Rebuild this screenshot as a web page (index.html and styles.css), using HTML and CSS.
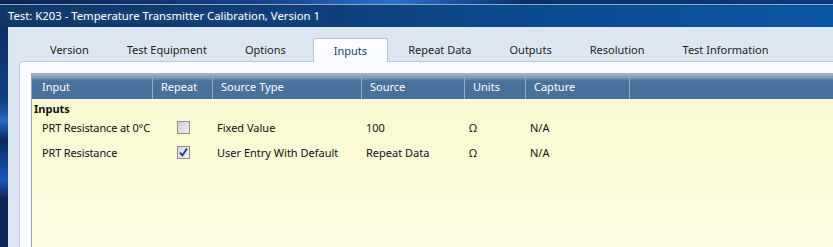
FILE: index.html
```html
<!DOCTYPE html>
<html lang="en">
<head>
  <meta charset="UTF-8" />
  <title>Test: K203 - Temperature Transmitter Calibration, Version 1</title>
  <link rel="stylesheet" href="styles.css">
</head>
<body>
  <div class="window">
    <div class="titlebar">Test: K203 - Temperature Transmitter Calibration, Version 1</div>
    <div class="client">
      <div class="tabs">
        <div class="tab">Version</div>
        <div class="tab">Test Equipment</div>
        <div class="tab">Options</div>
        <div class="tab selected">Inputs</div>
        <div class="tab">Repeat Data</div>
        <div class="tab">Outputs</div>
        <div class="tab">Resolution</div>
        <div class="tab">Test Information</div>
      </div>
      <div class="panel">
        <div class="grid">
          <div class="grid-head">
            <div class="hcell first">Input</div>
            <div class="hcell">Repeat</div>
            <div class="hcell">Source Type</div>
            <div class="hcell">Source</div>
            <div class="hcell">Units</div>
            <div class="hcell">Capture</div>
            <div class="hcell last"></div>
          </div>
          <div class="grid-body">
            <div class="group">Inputs</div>
            <div class="row">
              <div class="cell first">PRT Resistance at 0°C</div>
              <div class="cell center"><span class="check"></span></div>
              <div class="cell">Fixed Value</div>
              <div class="cell">100</div>
              <div class="cell">Ω</div>
              <div class="cell">N/A</div>
            </div>
            <div class="row">
              <div class="cell first">PRT Resistance</div>
              <div class="cell center">
                <span class="check checked">
                  <svg width="11" height="11" viewBox="0 0 11 11"><path d="M2 5.5 L4.3 8.5 L9 1.5" fill="none" stroke="#27388c" stroke-width="1.8"/></svg>
                </span>
              </div>
              <div class="cell">User Entry With Default</div>
              <div class="cell">Repeat Data</div>
              <div class="cell">Ω</div>
              <div class="cell">N/A</div>
            </div>
          </div>
        </div>
      </div>
    </div>
  </div>
</body>
</html>
```

FILE: styles.css
```css
html, body {
  margin: 0;
  height: 100%;
  overflow: hidden;
}
body {
  font-family: 'Noto Sans', 'Liberation Sans', sans-serif;
  font-size: 11px;
  color: #111;
  background: linear-gradient(100deg, #0a2450 0%, #15428a 30%, #2c6fd0 45%, #0d2e66 60%, #0b3a80 100%);
}
.window {
  display: flex;
  flex-direction: column;
  margin-top: 4px;
  height: calc(100% - 5px);
  border-top: 1px solid #8ea7c6;
  padding-left: 8px;
  background: linear-gradient(180deg, #0b2c5c 0%, #123f82 40%, #2a66c8 48%, #0a2a5a 56%, #1b56c4 72%, #0a2654 80%);
}
.titlebar {
  height: 22px;
  line-height: 22px;
  margin-left: -8px;
  padding-left: 8px;
  color: #fff;
  font-size: 11.3px;
  white-space: nowrap;
  background: linear-gradient(90deg, #103766 0%, #0e3f7c 40%, #0c4a8e 60%, #0b56a4 100%);
  text-shadow: 0 0 6px rgba(255,255,255,0.25);
}
.client {
  flex: 1;
  display: flex;
  flex-direction: column;
  background: #dde7f3;
  padding-left: 11px;
}
.tabs {
  display: flex;
  padding-top: 11px;
  padding-left: 12px;
  height: 23px;
}
.tab {
  padding: 0 19px;
  line-height: 23px;
  color: #222;
  white-space: nowrap;
}
.tab.selected {
  margin: 0 1px 0 8px;
  padding: 0 20px;
  color: #1c3d6c;
  background: linear-gradient(180deg, #ffffff, #f8fbff);
  border: 1px solid #b9c5d2;
  border-bottom: none;
  border-radius: 3px 3px 0 0;
  height: 23px;
  margin-bottom: -1px;
  position: relative;
  z-index: 1;
}
.panel {
  flex: 1;
  background: #f8fbff;
  border-top: 1px solid #c1cbd6;
  border-left: 1px solid #c1cbd6;
  border-radius: 4px 0 0 0;
  padding: 11px 0 0 11px;
  display: flex;
  flex-direction: column;
}
.grid {
  flex: 1;
  display: flex;
  flex-direction: column;
  border-top: 1px solid #a6b1bc;
  border-left: 1px solid #98a3ae;
}
.grid-head {
  display: grid;
  grid-template-columns: 121px 60px 149px 103px 61px 104px 1fr;
  height: 25px;
  background: linear-gradient(180deg, #a2b6ca 0%, #6f91b2 18%, #4a729b 28%, #47709a 100%);
  border-bottom: 1px solid #f2f6fa;
}
.hcell {
  color: #fff;
  line-height: 25px;
  padding-left: 8px;
  border-right: 1px solid #93adc5;
  white-space: nowrap;
}
.hcell.first {
  padding-left: 10px;
}
.hcell.last {
  border-right: none;
}
.grid-body {
  flex: 1;
  background: linear-gradient(180deg, #f9f9d0 0%, #fbfbd8 40%, #fcfce5 100%);
}
.group {
  font-weight: bold;
  padding-left: 2px;
  height: 16px;
  line-height: 18px;
}
.row {
  display: grid;
  grid-template-columns: 121px 60px 149px 103px 61px 104px;
  height: 25px;
  line-height: 24px;
}
.cell {
  padding-left: 4px;
  white-space: nowrap;
}
.cell.first {
  padding-left: 10px;
  letter-spacing: -0.15px;
}
.cell.center {
  display: flex;
  align-items: center;
  justify-content: center;
  padding-left: 0;
}
.check {
  width: 11px;
  height: 11px;
  border: 1px solid #8e8f8f;
  background: linear-gradient(135deg, #cfcfcf, #efefef);
  display: flex;
  margin-top: -2px;
}
.check.checked {
  background: linear-gradient(135deg, #d6d6d6, #f2f2f2);
}
```
